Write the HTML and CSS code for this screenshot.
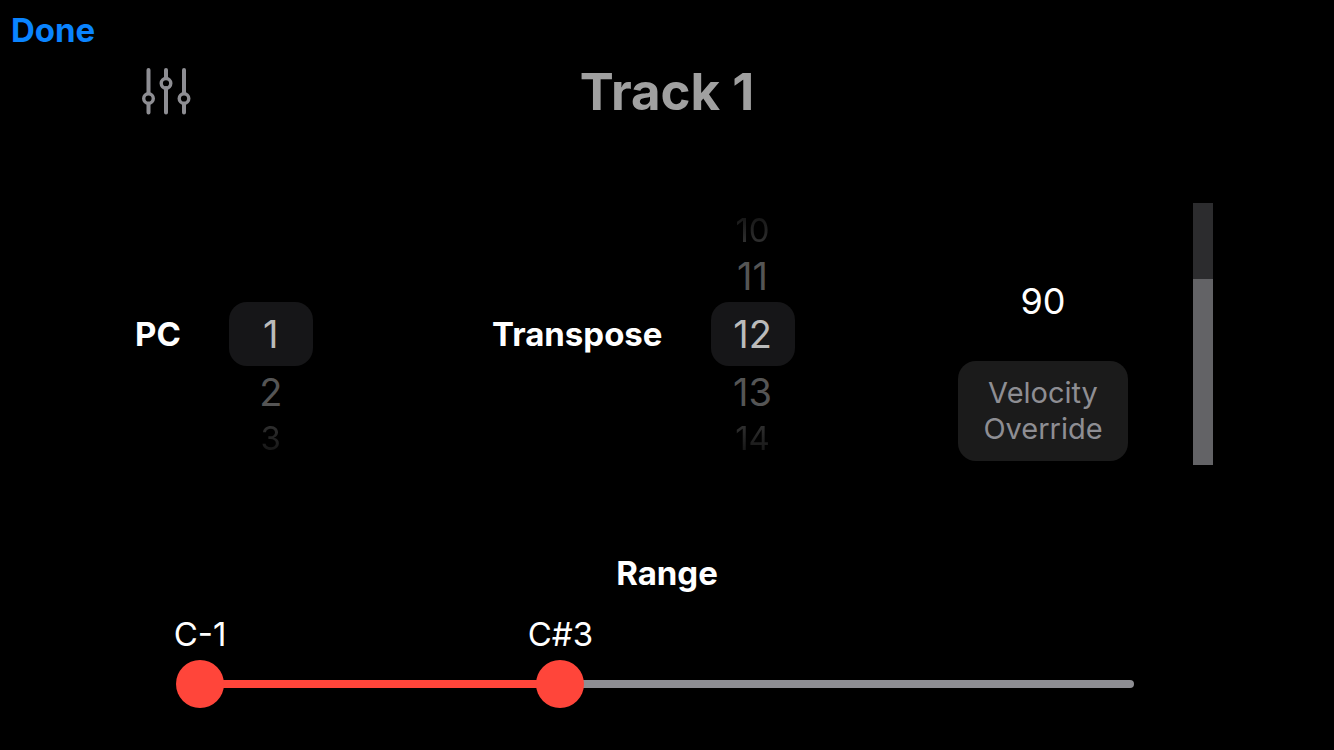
FILE: index.html
```html
<!DOCTYPE html>
<html lang="en">
<head>
    <meta charset="UTF-8">
    <meta name="viewport" content="width=device-width, initial-scale=1.0">
    <title>Track 1</title>
    <link rel="stylesheet" href="styles.css">
</head>
<body>

    <nav class="navbar">
        <button class="done-btn" type="button">Done</button>
    </nav>

    <header class="track-header">
        <button class="icon-btn" type="button" aria-label="Mixer">
            <svg width="50" height="48" viewBox="0 0 50 48" fill="none" stroke="#8e8e93" stroke-width="4" stroke-linecap="round">
                <path d="M7.5 2V25M7.5 36V44.5M25 2V10M25 20V44.5M43 2V25M43 36V44.5"/>
                <g stroke-width="3.4">
                    <circle cx="7.5" cy="30.5" r="4.8"/>
                    <circle cx="25" cy="15.3" r="4.8"/>
                    <circle cx="43" cy="30.5" r="4.8"/>
                </g>
            </svg>
        </button>
        <h1>Track 1</h1>
    </header>

    <main>
        <section class="controls">
            <div class="picker-group">
                <span class="label" id="pcLabel">PC</span>
                <div class="picker first" role="listbox" aria-labelledby="pcLabel">
                    <button class="selected" type="button" role="option" aria-selected="true">1</button>
                    <button class="near" type="button" role="option">2</button>
                    <button class="far below" type="button" role="option">3</button>
                </div>
            </div>

            <div class="picker-group">
                <span class="label" id="transposeLabel">Transpose</span>
                <div class="picker" role="listbox" aria-labelledby="transposeLabel">
                    <button class="far above" type="button" role="option">10</button>
                    <button class="near" type="button" role="option">11</button>
                    <button class="selected" type="button" role="option" aria-selected="true">12</button>
                    <button class="near" type="button" role="option">13</button>
                    <button class="far below" type="button" role="option">14</button>
                </div>
            </div>

            <div class="velocity-group">
                <div class="velocity">
                    <output for="velocity">90</output>
                    <button class="override-btn" type="button">Velocity Override</button>
                </div>
                <input class="velocity-slider" id="velocity" type="range" min="0" max="127" value="90" aria-label="Velocity" style="--value: 90">
            </div>
        </section>

        <section class="range">
            <h2>Range</h2>
            <div class="range-slider" style="--low: 0; --high: 49">
                <div class="notes">
                    <output class="note low" for="lowNote">C-1</output>
                    <output class="note high" for="highNote">C#3</output>
                </div>
                <div class="track">
                    <input id="lowNote" type="range" min="0" max="127" value="0" aria-label="Lowest note">
                    <input id="highNote" type="range" min="0" max="127" value="49" aria-label="Highest note">
                </div>
            </div>
        </section>
    </main>

</body>
</html>
```
FILE: styles.css
```css
* {
    box-sizing: border-box;
}
body {
    margin: 0;
    min-height: 100vh;
    background: #000;
    color: #fff;
    font-family: Inter, "Liberation Sans", sans-serif;
    font-size: 33px;
}
button {
    padding: 0;
    border: none;
    background: none;
    color: inherit;
    font: inherit;
    cursor: pointer;
}
h1, h2 {
    margin: 0;
}
.navbar {
    padding: 8px 11px 0;
}
.done-btn {
    color: #0a84ff;
    font-weight: 700;
    line-height: 44px;
}
.track-header {
    display: grid;
    grid-template-columns: 1fr auto 1fr;
    align-items: center;
    padding: 8px 135px 0;
}
.track-header h1 {
    color: #a0a0a0;
    font-size: 51px;
    line-height: 64px;
}
.icon-btn {
    justify-self: start;
    padding: 6px;
}
.icon-btn svg {
    display: block;
}

/* Pickers and velocity */
.controls {
    display: grid;
    grid-template-columns: 357fr 466fr 255fr;
    align-items: center;
    padding: 79px 121px 0 135px;
}
.picker-group {
    display: flex;
    align-items: center;
    gap: 48px;
}
.label, h2 {
    font-size: 33px;
    font-weight: 700;
}
.picker {
    display: grid;
    grid-template-rows: 40px 52px 64px 52px 40px;
    width: 84px;
}
/* no values above the first one, so start on the middle row */
.picker.first {
    padding-top: 92px;
    grid-template-rows: 64px 52px 40px;
}
.picker .selected {
    border-radius: 18px;
    background: #161618;
    color: #bbb;
    font-size: 38px;
}
.picker .near {
    color: #555;
    font-size: 38px;
}
.picker .far {
    background: linear-gradient(#363636, #101010);
    background-clip: text;
    color: transparent;
    font-size: 33px;
}
.picker .above {
    background-image: linear-gradient(#101010, #363636);
}
.velocity-group {
    display: flex;
    justify-content: space-between;
    height: 262px;
}
.velocity {
    display: flex;
    flex-direction: column;
    align-items: center;
    justify-content: flex-end;
    gap: 38px;
    padding-bottom: 4px;
}
.velocity output {
    font-size: 36px;
    line-height: 44px;
}
.override-btn {
    width: 170px;
    height: 100px;
    padding: 0 20px;
    border-radius: 18px;
    background: #1b1b1b;
    color: #8e8e93;
    font-size: 29px;
    line-height: 36px;
}
.velocity-slider {
    appearance: none;
    writing-mode: vertical-lr;
    direction: rtl;
    width: 20px;
    height: 100%;
    margin: 0;
    background: linear-gradient(to top, #636366 calc(var(--value) / 127 * 100%), #2c2c2e 0);
}
.velocity-slider::-webkit-slider-thumb {
    appearance: none;
    width: 20px;
    height: 1px;
    background: transparent;
}

/* Note range */
.range {
    padding: 86px 15% 40px;
}
.range h2 {
    line-height: 44px;
    text-align: center;
}
.notes {
    position: relative;
    height: 44px;
    margin-top: 17px;
}
.note {
    position: absolute;
    line-height: 44px;
    transform: translateX(-50%);
}
.note.low {
    left: calc(var(--low) / 127 * 100%);
}
.note.high {
    left: calc(var(--high) / 127 * 100%);
}
.track {
    position: relative;
    height: 8px;
    margin-top: 24px;
    border-radius: 4px;
    background: linear-gradient(to right, #ff453a calc(var(--high) / 127 * 100%), #8e8e93 0);
}
.track input {
    appearance: none;
    position: absolute;
    top: -20px;
    left: -24px;
    width: calc(100% + 48px);
    height: 48px;
    margin: 0;
    background: none;
    pointer-events: none;
}
.track input::-webkit-slider-thumb {
    appearance: none;
    width: 48px;
    height: 48px;
    border-radius: 50%;
    background: #ff453a;
    pointer-events: auto;
}
```
